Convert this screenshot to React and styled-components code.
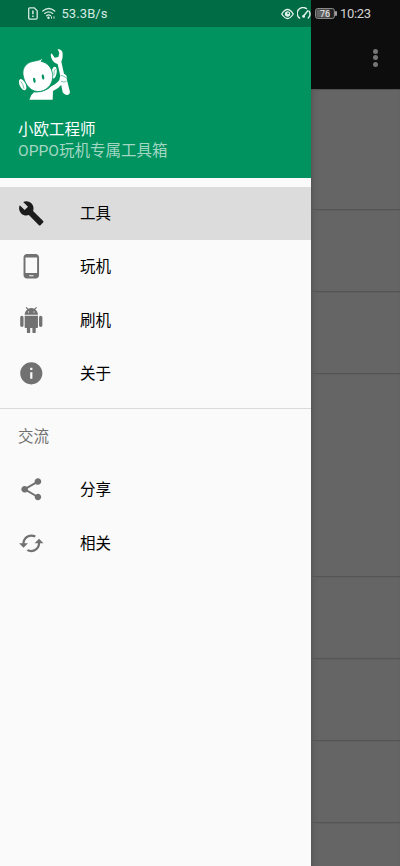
import React, {useState} from 'react'
import styled, {createGlobalStyle} from 'styled-components';

import {MdBuild, MdPhoneAndroid, MdInfo, MdShare, MdCached} from 'react-icons/md';

const GlobalStyle = createGlobalStyle`
    body {
        margin: 0;
        background: #646464;
        font-family: Roboto, "Noto Sans CJK SC", sans-serif;
    }
`;
const Screen = styled.div`
    display: flex;
    width: 400px;
    height: 866px;
    overflow: hidden;
`;
const Drawer = styled.aside`
    width: 311px;
    height: 100%;
    flex: none;
    background: #fafafa;
`;
const StatusBar = styled.div`
    display: flex;
    align-items: center;
    box-sizing: border-box;
    height: 27px;
    padding-left: ${(props) => props.$left}px;
    background: ${(props) => props.$color};
    svg {
        display: block;
        flex: none;
    }
`;
const StatusIcons = styled.div`
    display: flex;
    align-items: center;
    gap: ${(props) => props.$gap}px;
`;
const Speed = styled.span`
    margin: 1px auto 0 5px;
    color: #d5ebe1;
    font-size: 13px;
    line-height: 16px;
    letter-spacing: 0.1px;
`;
const Clock = styled.span`
    margin: 1px 0 0 3px;
    color: #d2d2d2;
    font-size: 13px;
    line-height: 16px;
    letter-spacing: -0.3px;
`;
const Header = styled.div`
    box-sizing: border-box;
    height: 151px;
    padding: 13px 0 0 10px;
    background: #00935f;
    svg {
        display: block;
    }
`;
const Name = styled.div`
    margin: 9px 0 0 8px;
    color: #fff;
    font-size: 15.5px;
    line-height: 22px;
`;
const Subtitle = styled.div`
    margin-left: 8px;
    color: #a3d6c3;
    font-size: 15.5px;
    line-height: 21px;
`;
const Nav = styled.ul`
    margin: 0;
    padding: 8.7px 0;
    list-style: none;
`;
const Item = styled.li`
    display: flex;
    align-items: center;
    height: 53.3px;
    padding-left: 17.7px;
    background: ${(props) => props.$active ? "#dcdcdc" : "transparent"};
    color: ${(props) => props.$active ? "#1c1c1c" : "#717171"};
    cursor: pointer;
    svg {
        width: 26.6px;
        height: 26.6px;
        flex: none;
    }
`;
const Title = styled.span`
    margin: 1.5px 0 0 35.7px;
    color: #000;
    font-size: 15.5px;
    line-height: 22px;
`;
const Group = styled.li`
    box-sizing: border-box;
    height: 54.6px;
    margin-top: 8.5px;
    border-top: 1px solid #dadada;
    padding: 17px 0 0 18px;
    color: #717171;
    font-size: 15.5px;
    line-height: 22px;
`;
const Page = styled.main`
    width: 89px;
    height: 100%;
    background: #646464;
`;
const Toolbar = styled.div`
    display: flex;
    flex-direction: column;
    align-items: flex-end;
    box-sizing: border-box;
    height: 62px;
    padding: 21.5px 22px 0 0;
    gap: 1.7px;
    background: #0d0d0d;
`;
const Dot = styled.i`
    width: 5px;
    height: 5px;
    border-radius: 50%;
    background: #757575;
`;
const List = styled.div`
    height: 777px;
    overflow: hidden;
    background: linear-gradient(90deg, #575757 0, #606060 3px, #656565 9px);
    box-shadow: inset 0 1px 1px #505050;
`;
const Card = styled.div`
    box-sizing: border-box;
    height: ${(props) => props.$height}px;
    border-bottom: 1px solid #555;
    box-shadow: 0 1px 0 #5f5f5f;
`;

const cards = [121, 82, 82, 203, 82, 82, 82, 82];

// full body robot, MdAndroid only has the head
function AndroidIcon() {
    return (
        <svg viewBox="0 0 24 24" fill="currentColor">
            <path d="M6 18c0 .55.45 1 1 1h1v3.5c0 .83.67 1.5 1.5 1.5s1.5-.67 1.5-1.5V19h2v3.5c0 .83.67 1.5 1.5 1.5s1.5-.67 1.5-1.5V19h1c.55 0 1-.45 1-1V8H6v10zM3.5 8C2.67 8 2 8.67 2 9.5v7c0 .83.67 1.5 1.5 1.5S5 17.33 5 16.5v-7C5 8.67 4.33 8 3.5 8zm17 0c-.83 0-1.5.67-1.5 1.5v7c0 .83.67 1.5 1.5 1.5s1.5-.67 1.5-1.5v-7c0-.83-.67-1.5-1.5-1.5zm-4.97-5.84l1.3-1.3c.2-.2.2-.51 0-.71-.2-.2-.51-.2-.71 0l-1.48 1.48C13.85 1.23 12.95 1 12 1c-.96 0-1.86.23-2.66.63L7.85.15c-.2-.2-.51-.2-.71 0-.2.2-.2.51 0 .71l1.31 1.31C6.97 3.26 6 5.01 6 7h12c0-1.99-.97-3.75-2.47-4.84zM10 5H9V4h1v1zm5 0h-1V4h1v1z"/>
        </svg>
    )
}

const items = [
    { id: "tools", label: "工具", icon: MdBuild },
    { id: "phone", label: "玩机", icon: MdPhoneAndroid },
    { id: "flash", label: "刷机", icon: AndroidIcon },
    { id: "about", label: "关于", icon: MdInfo },
];
const links = [
    { id: "share", label: "分享", icon: MdShare },
    { id: "related", label: "相关", icon: MdCached },
];

function SimIcon() {
    return (
        <svg width="10" height="13" viewBox="0 0 10 13" fill="none" stroke="#d5ebe1" strokeWidth="1.3">
            <path d="M1.7 .8h4.6L9.2 3.7v7.1q0 1.3-1.2 1.3H1.9Q.7 12.1 .7 10.8V2Q.7 .8 1.7 .8z"/>
            <path d="M4.9 3.5v3.8M4.9 8.6v1.5" strokeWidth="1.5"/>
        </svg>
    )
}

function WifiIcon() {
    return (
        <svg width="14" height="13" viewBox="0 0 14 13" fill="none" stroke="#d5ebe1" strokeWidth="1.3" strokeLinecap="round">
            <path d="M.8 4Q6.7-1 12.7 4M2.7 6.4q4-3.2 8 0M4.6 8.7q2.1-1.6 3.8-.2"/>
            <circle cx="6.5" cy="10.7" r=".6" fill="#d5ebe1"/>
            <path d="M9.5 9.8v1.4M12 9.8v1.4" strokeWidth="1"/>
        </svg>
    )
}

function EyeIcon() {
    return (
        <svg width="13" height="12" viewBox="0 0 13 12" fill="none" stroke="#e4f3ec" strokeWidth="1.3">
            <path d="M.7 6Q6.5-3 12.3 6 6.5 15 .7 6z"/>
            <circle cx="6.5" cy="6" r="2.1" fill="#e4f3ec"/>
            <circle cx="7.1" cy="5.4" r=".8" fill="#006c46" stroke="none"/>
        </svg>
    )
}

function GaugeIcon() {
    return (
        <svg width="14" height="13" viewBox="0 0 14 13" fill="none" stroke="#e4f3ec" strokeWidth="1.4" strokeLinecap="round">
            <path d="M2.6 11.1A5.8 5.8 0 0 1 9.5 1.6M12.1 4.2a5.8 5.8 0 0 1-.8 6.9"/>
            <path d="M6.4 9.3L10.8 3.7"/>
            <circle cx="6.6" cy="9.2" r=".8" fill="#e4f3ec"/>
        </svg>
    )
}

function Battery() {
    return (
        <svg width="22" height="11" viewBox="0 0 22 11">
            <rect x=".6" y=".6" width="18.8" height="9.8" rx="2" fill="#222" stroke="#969696"/>
            <rect x="1.5" y="1.5" width="13.4" height="8" rx="1" fill="#636363"/>
            <path d="M21 3.2v4.6" stroke="#c5c5c5" strokeWidth="1.6"/>
            <text x="10" y="8.8" textAnchor="middle" fill="#eee" fontSize="9" fontFamily="Roboto">76</text>
        </svg>
    )
}

// mascot holding a wrench
function Mascot() {
    return (
        <svg width="80" height="70" viewBox="0 0 240 210">
            <g fill="#fff">
                <ellipse cx="38" cy="134" rx="9" ry="18" transform="rotate(-26 38 134)"/>
                <ellipse cx="132" cy="98" rx="8" ry="18" transform="rotate(9 132 98)"/>
                <path d="M58 179Q61 165 72 157 106 159 124 139 142 130 151 116L160 128Q146 145 129 153L128 179z"/>
                <path d="M143 27Q158 28 158 42 159 56 154 65L162 101Q173 106 170 116L180 157Q178 167 168 164 161 163 158 157L152 127Q146 119 151 108L143 72Q124 66 122 44L125 40 134 53 145 51 148 39z"/>
                <path d="M39 104C36 82 51 68 69 64 77 62 86 62 94 57L98 58 93 64C113 68 126 84 128 104 130 128 116 149 92 154 65 159 44 136 39 104z" stroke="#00935f" strokeWidth="2.5"/>
            </g>
            <g fill="none" stroke="#00935f" strokeWidth="1.6">
                <path d="M32 124Q40 132 42 146M132 106Q131 94 136 87"/>
                <path d="M153 106Q162 108 170 114M153 124Q163 129 170 123"/>
            </g>
            <g fill="#00935f">
                <ellipse cx="73" cy="121" rx="3.6" ry="8" transform="rotate(-12 73 121)"/>
                <ellipse cx="99" cy="111" rx="3.6" ry="8" transform="rotate(-12 99 111)"/>
            </g>
        </svg>
    )
}

function App() {
    const [active, setActive] = useState("tools");

    const renderItem = ({ id, label, icon: Icon }) => (
        <Item key={id} $active={active === id} onClick={() => setActive(id)}>
            <Icon/>
            <Title>{label}</Title>
        </Item>
    )

    return (
        <Screen>
            <GlobalStyle/>
            <Drawer>
                <StatusBar $left={28.4} $color="#006c46">
                    <StatusIcons $gap={4}>
                        <SimIcon/>
                        <WifiIcon/>
                    </StatusIcons>
                    <Speed>53.3B/s</Speed>
                    <StatusIcons $gap={3}>
                        <EyeIcon/>
                        <GaugeIcon/>
                    </StatusIcons>
                </StatusBar>
                <Header>
                    <Mascot/>
                    <Name>小欧工程师</Name>
                    <Subtitle>OPPO玩机专属工具箱</Subtitle>
                </Header>
                <Nav>
                    {items.map(renderItem)}
                    <Group>交流</Group>
                    {links.map(renderItem)}
                </Nav>
            </Drawer>
            <Page>
                <StatusBar $left={4} $color="#0d0d0d">
                    <Battery/>
                    <Clock>10:23</Clock>
                </StatusBar>
                <Toolbar>
                    <Dot/>
                    <Dot/>
                    <Dot/>
                </Toolbar>
                <List>
                    {cards.map((height, i) => <Card key={i} $height={height}/>)}
                </List>
            </Page>
        </Screen>
    )
}

export default App
